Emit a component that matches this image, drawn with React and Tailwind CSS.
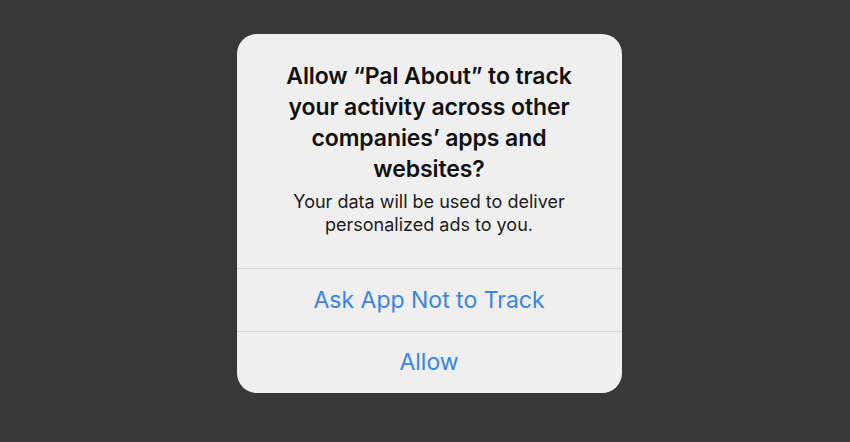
export default function App() {
  return (
    <div
      className="w-[850px] h-[442px] bg-[#383838] flex items-start justify-center pt-[34px] pl-[8px]"
      style={{ fontFamily: 'Inter, "Noto Sans", sans-serif' }}
    >
      <div className="w-[385px] h-[359px] bg-[#efefef] rounded-[20px] flex flex-col overflow-hidden">
        <div className="pt-[27px] pb-[32px] px-4 text-center">
          <h1 className="text-[23px] leading-[31px] font-semibold text-[#111] tracking-[-0.1px]">
            Allow “Pal About” to track
            <br />
            your activity across other
            <br />
            companies’ apps and
            <br />
            websites?
          </h1>
          <p className="mt-[5px] text-[18px] leading-[23px] text-[#1c1c1c]">
            Your data will be used to deliver
            <br />
            personalized ads to you.
          </p>
        </div>
        <button className="h-[63px] border-t border-[#d8d8d8] text-[23px] text-[#3a85e0]">
          Ask App Not to Track
        </button>
        <button className="flex-1 border-t border-[#d8d8d8] text-[23px] text-[#3a85e0]">
          Allow
        </button>
      </div>
    </div>
  )
}
